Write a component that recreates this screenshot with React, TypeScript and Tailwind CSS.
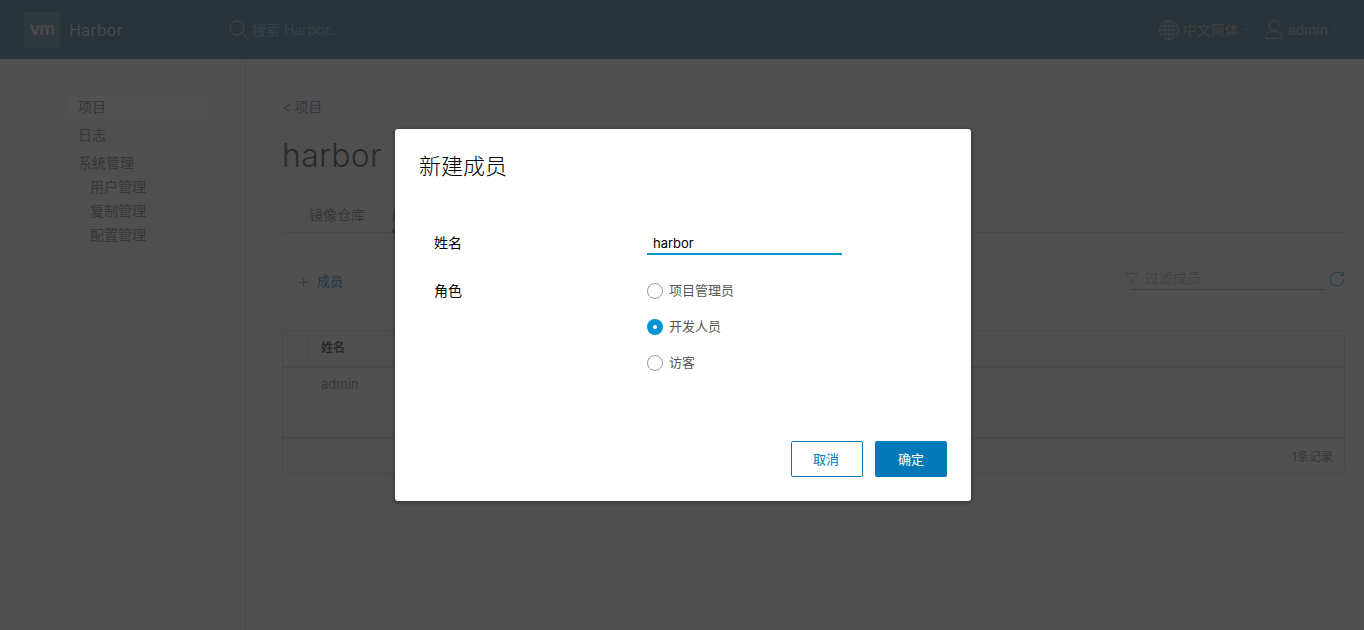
import { Plus, ChevronDown } from 'lucide-react';

const font = { sans: 'font-["Inter","Noto_Sans_CJK_SC",sans-serif]' };

function Radio({ label, checked }: { label: string; checked?: boolean }) {
  return (
    <label className="flex items-center h-[36px]">
      {checked ? (
        <span className="w-[16px] h-[16px] rounded-full bg-[#0094d2] flex items-center justify-center">
          <span className="w-[4px] h-[4px] rounded-full bg-white" />
        </span>
      ) : (
        <span className="w-[16px] h-[16px] rounded-full border border-[#9a9a9a] bg-white" />
      )}
      <span className="ml-[6px] text-[13px] text-[#565656]">{label}</span>
    </label>
  );
}

export default function App() {
  return (
    <div className={`relative h-[630px] w-[1364px] overflow-hidden bg-[#ececec] ${font.sans}`}>
      {/* Header */}
      <header className="h-[59px] bg-[#0c4268] flex items-center">
        <div className="ml-[24px] w-[36px] h-[36px] bg-[#2a5c7c] flex items-center justify-center">
          <span className="font-['Liberation_Sans'] font-bold text-[18px] tracking-[-1px] text-[#c4c4c4]">vm</span>
        </div>
        <span className="ml-[9px] text-[16px] tracking-[0.4px] font-light text-[#dedede] w-[160px]">Harbor</span>
        <svg width="20" height="20" viewBox="0 0 20 20" fill="none" stroke="#a0b5c5" strokeWidth="1">
          <circle cx="8" cy="8" r="7" />
          <path d="M13 13l6 6" />
        </svg>
        <span className="ml-[3px] text-[14px] text-[#5a8fb8]">搜索 Harbor...</span>
        <div className="ml-auto flex items-center mr-[24px]">
          <svg width="20" height="20" viewBox="0 0 20 20" fill="none" stroke="#959ea5" strokeWidth="1">
            <circle cx="10" cy="10" r="9.5" />
            <ellipse cx="10" cy="10" rx="4.5" ry="9.500" />
            <path d="M10 .5v19M1.500 6h17M1.500 14h17M.5 10h19" />
          </svg>
          <span className="ml-[4px] text-[14px] text-[#909090]">中文简体</span>
          <ChevronDown className="ml-[3px] w-[9px] h-[9px] text-[#909090]" strokeWidth={2.5} />
          <svg className="ml-[14px]" width="18" height="21" viewBox="0 0 19 21" fill="none" stroke="#959ea5" strokeWidth="1">
            <circle cx="9.5" cy="6" r="5" />
            <path d="M1 20v-3.500c0-2 3-4 8.500-4s8.500 2 8.500 4V20z" />
          </svg>
          <span className="ml-[5px] text-[14px] text-[#909090]">admin</span>
          <ChevronDown className="ml-[3px] w-[9px] h-[9px] text-[#909090]" strokeWidth={2.5} />
        </div>
      </header>

      <div className="flex h-[571px]">
        {/* Sidebar */}
        <nav className="w-[246px] border-r border-[#c4c4c4] pl-[66px] pt-[36px] text-[14px] text-[#565656] shrink-0">
          <div className="w-[143px] h-[24px] pl-[12px] leading-[24px] bg-[#f6f7f8]">项目</div>
          <div className="h-[28px] pl-[12px] mt-[2px] leading-[28px]">日志</div>
          <div className="relative h-[26px] pl-[12px] leading-[28px]">
            <ChevronDown className="absolute left-[-6px] top-[9px] w-[10px] h-[10px] text-[#999]" strokeWidth={1.25} />
            系统管理
          </div>
          <div className="pl-[24px] leading-[24px]">
            <div>用户管理</div>
            <div>复制管理</div>
            <div>配置管理</div>
          </div>
        </nav>

        {/* Content */}
        <main className="flex-1 pl-[36px] pr-[19px] pt-[38px]">
          <div className="text-[14px] leading-[20px] text-[#5659b6]">
            <span className="mr-[-1px]">&lt; </span>项目
          </div>
          <h1 className="mt-[19px] text-[32px] leading-[40px] tracking-[0.3px] font-light text-[#000]">harbor</h1>
          <div className="mt-[21px] h-[36px] border-b border-[#c4c4c4] flex text-[14px] text-[#565656]">
            <div className="ml-[27px] w-[83px] leading-[36px]">镜像仓库</div>
            <div className="h-[36px] w-[60px] border-b-[3px] border-[#0094d2] leading-[36px]">成员</div>
          </div>

          <div className="mt-[34px] h-[30px] flex items-center">
            <Plus className="ml-[15px] w-[13px] h-[13px] text-[#0079b8]" strokeWidth={1.75} />
            <span className="ml-[7px] text-[13px] font-medium text-[#0079b8]">成员</span>
            <div className="ml-auto mt-[-8px] flex items-center">
              <svg width="13" height="13" viewBox="0 0 13 13" fill="none" stroke="#8a8a8a" strokeWidth="1">
                <path d="M.8 1.500h11.400L8 6.500v4.500l-3-1.500v-3z" />
              </svg>
              <div className="relative ml-[-8px] w-[194px] h-[24px] pl-[15px] border-b border-[#8a8a8a] text-[14px] leading-[24px] text-[#9a9a9a]">
                过滤成员
              </div>
              <svg className="ml-[5px] mt-[2px]" width="16" height="16" viewBox="0 0 16 16" fill="none" stroke="#0079b8" strokeWidth="1">
                <path d="M13.500 3.800A7 7 0 1 0 15 8" />
                <path d="M14.500 .8v3.500H11" />
              </svg>
            </div>
          </div>

          {/* Table */}
          <div className="mt-[33px] h-[144px] border border-[#c4c4c4] rounded-[3px] text-[13px] text-[#565656]">
            <div className="h-[37px] flex items-center border-b-2 border-[#c4c4c4] pb-[2px]">
              <div className="w-[26px] h-[22px] border-r border-[#d4d4d4]" />
              <span className="ml-[12px] text-[12px] font-semibold text-[#000]">姓名</span>
            </div>
            <div className="h-[35px] flex items-center border-b border-[#d4d4d4]">
              <span className="ml-[38px]">admin</span>
            </div>
            <div className="h-[36px] border-b-2 border-[#c4c4c4]" />
            <div className="h-[34px] flex items-center justify-end pt-[1px] pr-[11px] text-[12px]">1条记录</div>
          </div>
        </main>
      </div>

      {/* Backdrop */}
      <div className="absolute inset-0 bg-[rgba(49,49,49,0.84)]" />

      {/* Modal */}
      <div className="absolute inset-0 flex items-center justify-center pl-[2px]">
        <div className="w-[576px] h-[372px] bg-white rounded-[3px] shadow-[0_1px_2px_2px_rgba(0,0,0,0.2)] flex flex-col p-[24px] pt-[20px]">
          <h3 className="text-[22px] leading-[34px] font-light text-[#000]">新建成员</h3>
          <div className="mt-[44px] pl-[15px] flex h-[32px] items-center">
            <span className="w-[213px] pb-[2px] text-[14px] text-[#000]">姓名</span>
            <div className="w-[195px] h-[24px] pl-[6px] pt-[1px] border-b-2 border-[#0094d2] text-[13px] leading-[22px] text-[#000]">harbor</div>
          </div>
          <div className="mt-[14px] pl-[15px] flex">
            <span className="w-[213px] text-[14px] leading-[36px] text-[#000]">角色</span>
            <div className="flex flex-col">
              <Radio label="项目管理员" />
              <Radio label="开发人员" checked />
              <Radio label="访客" />
            </div>
          </div>
          <div className="mt-auto flex justify-end gap-[12px] text-[13px]">
            <button className="w-[72px] h-[36px] pt-[1px] pr-[2px] rounded-[2px] border border-[#0079b8] text-[#0079b8]">取消</button>
            <button className="w-[72px] h-[36px] pt-[1px] rounded-[2px] bg-[#0079b8] text-white">确定</button>
          </div>
        </div>
      </div>
    </div>
  );
}
